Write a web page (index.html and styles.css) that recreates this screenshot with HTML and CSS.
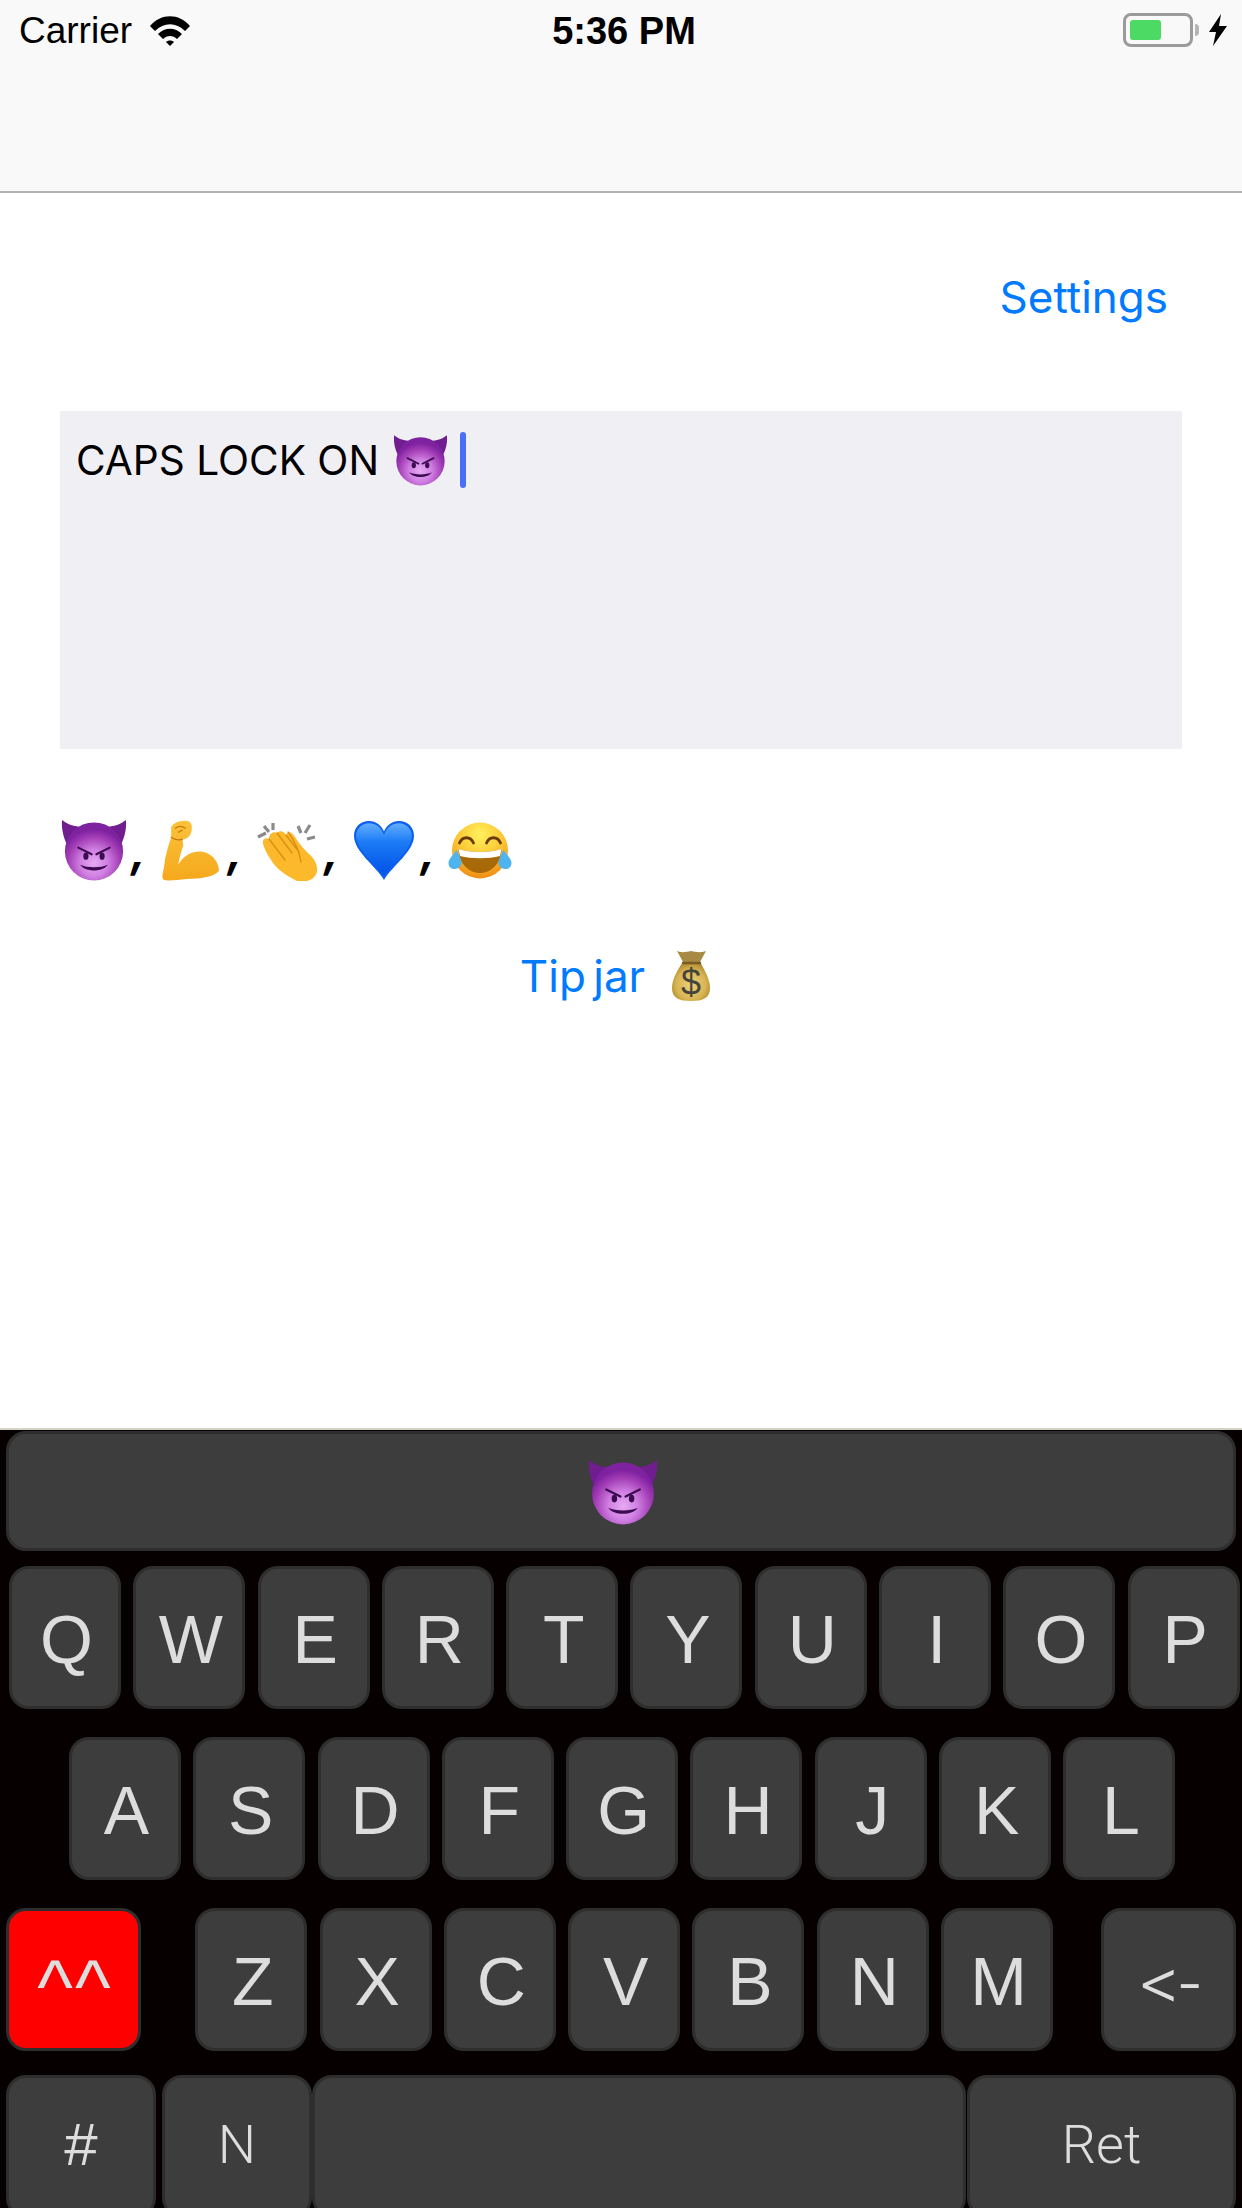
FILE: index.html
```html
<!DOCTYPE html>
<html lang="en">
<head>
    <meta charset="UTF-8">
    <title>Caps Lock Keyboard</title>
    <link rel="stylesheet" href="styles.css">
</head>
<body>

    <!-- shared emoji drawings -->
    <svg class="defs" width="0" height="0">
        <defs>
            <radialGradient id="devilFace" cx="50%" cy="70%" r="58%">
                <stop offset="0" stop-color="#e6aaf3"/>
                <stop offset="0.4" stop-color="#d080e2"/>
                <stop offset="0.78" stop-color="#a23cb5"/>
                <stop offset="1" stop-color="#7f22a0"/>
            </radialGradient>
            <linearGradient id="armFill" x1="0" y1="0" x2="0" y2="1">
                <stop offset="0" stop-color="#fcc23a"/>
                <stop offset="1" stop-color="#f5a81c"/>
            </linearGradient>
            <linearGradient id="heartFill" x1="0" y1="0" x2="0" y2="1">
                <stop offset="0" stop-color="#62aefc"/>
                <stop offset="0.35" stop-color="#1d7cf6"/>
                <stop offset="1" stop-color="#0050e6"/>
            </linearGradient>
            <radialGradient id="laughFace" cx="50%" cy="22%" r="80%">
                <stop offset="0" stop-color="#fff25c"/>
                <stop offset="0.55" stop-color="#fcc332"/>
                <stop offset="1" stop-color="#ee8a12"/>
            </radialGradient>
            <radialGradient id="bagFill" cx="50%" cy="58%" r="60%">
                <stop offset="0" stop-color="#ecd07a"/>
                <stop offset="0.65" stop-color="#d8b453"/>
                <stop offset="1" stop-color="#a98226"/>
            </radialGradient>

            <symbol id="devil" viewBox="0 0 67 64">
                <path d="M0 0 C5 4 10 6 18 7 L8 30 C2 22 -1 10 0 0Z" fill="#701d90"/>
                <path d="M67 0 C62 4 57 6 49 7 L59 30 C65 22 68 10 67 0Z" fill="#701d90"/>
                <circle cx="33.500" cy="33" r="30.500" fill="url(#devilFace)"/>
                <path d="M17 29 L31 36 M50 29 L36 36" stroke="#3c0b50" stroke-width="2.200" stroke-linecap="round"/>
                <ellipse cx="25" cy="38" rx="2.700" ry="3.800" fill="#3c0b50"/>
                <ellipse cx="42" cy="38" rx="2.700" ry="3.800" fill="#3c0b50"/>
                <path d="M19 47 C26 50.500 41 50.500 48 47 C43 55 24 55 19 47Z" fill="#3c0b50"/>
            </symbol>

            <symbol id="muscle" viewBox="0 0 57 60">
                <path d="M9 7 C11 3 18 0 24 1 C29 1 30 6 29 11 C28 16 24 19 20 19 L21 25 C19 30 17 38 16 44 C21 35 29 31 37 31 C47 31 56 40 56 50 C52 56 38 58 24 58 C16 59 6 60 2 59 C-1 57 1 52 2 46 C3 36 6 26 9 17Z" fill="url(#armFill)"/>
                <path d="M13 8 C16 6 20 6 23 8 M16 12 L20 10 M9 17 C13 20 16 20 20 19" fill="none" stroke="#c47c0c" stroke-width="1.200" stroke-linecap="round"/>
            </symbol>

            <symbol id="clap" viewBox="0 0 60 61">
                <path d="M1 17 L9 13 M7 6 L12 12 M16 3 L16 10 M41 6 L44 13 M53 5 L48 13 M58 17 L50 19" stroke="#8a8a8a" stroke-width="3.200"/>
                <path d="M6 24 C5 19 9 17 12 19 C12 13 17 11 20 13 C23 10 27 11 29 15 L31 12 C35 12 37 15 40 20 C44 26 48 30 52 34 C58 39 61 46 60 52 C58 58 54 60 50 61 L40 61 C30 56 21 50 16 43 C12 37 8 31 6 24Z" fill="#fbb92b"/>
                <path d="M12 19 L28 40 M20 13 L35 33 M29 15 L42 32 M31 12 C37 20 42 30 44 42" fill="none" stroke="#d98f12" stroke-width="1.300" stroke-linecap="round"/>
            </symbol>

            <symbol id="heart" viewBox="0 0 59 58">
                <path d="M29.500 57 C22 44 1 30 1 15 C1 6 8 1 15 1 C22 1 27 5 29.500 11 C32 5 37 1 44 1 C51 1 58 6 58 15 C58 30 37 44 29.500 57Z" fill="#0a5ff0"/>
                <path d="M29.500 53 C22 42 3 29 3 15 C3 8 9 3 15 3 C22 3 27 7 29.500 14 C32 7 37 3 44 3 C50 3 56 8 56 15 C56 29 37 42 29.500 53Z" fill="url(#heartFill)"/>
            </symbol>

            <symbol id="laugh" viewBox="0 -2 63 61">
                <circle cx="31.500" cy="28.500" r="28" fill="url(#laughFace)"/>
                <path d="M11 21 C14 14 22 14 25 21 M38 21 C41 14 49 14 52 21" fill="none" stroke="#6b3a0a" stroke-width="2.800" stroke-linecap="round"/>
                <path d="M10 27 C22 31 41 31 53 27 C53 41 43 51 31.500 51 C20 51 10 41 10 27Z" fill="#a86a08"/>
                <path d="M10 27 C22 31 41 31 53 27 L51.500 34 C40 37 23 37 11.500 34Z" fill="#fff"/>
                <path d="M8 28 C4 34 0 37 0 41 C0 45 3 47 6 47 C10 47 13 44 13 41 C13 37 10 33 8 28Z" fill="#4db4f0"/>
                <path d="M55 28 C59 34 63 37 63 41 C63 45 60 47 57 47 C53 47 50 44 50 41 C50 37 53 33 55 28Z" fill="#4db4f0"/>
            </symbol>

            <symbol id="moneybag" viewBox="0 0 42 52">
                <path d="M7 1 C12 3 16 2 21 1 C26 2 30 3 36 1 L30 12 L13 12Z" fill="#a98a45"/>
                <path d="M13 12 C8 19 2 29 2 38 C2 48 9 51 21 51 C33 51 40 48 40 38 C40 29 34 19 30 12Z" fill="url(#bagFill)"/>
                <path d="M13 13 L30 13" stroke="#7a5d24" stroke-width="2.500" stroke-linecap="round"/>
                <text x="21" y="45" text-anchor="middle" class="bag-sign">$</text>
            </symbol>
        </defs>
    </svg>

    <div class="page">
        <div class="status">
            <div class="status-left">
                <span>Carrier</span>
                <svg class="wifi" viewBox="0 0 40 30">
                    <path d="M0 10 C11 -3 29 -3 40 10 L35 15 C26 6 14 6 5 15Z"/>
                    <path d="M8 18 C15 11 25 11 32 18 L27 23 C23 19 17 19 13 23Z"/>
                    <path d="M16 26 C18 24 22 24 24 26 L20 30Z"/>
                </svg>
            </div>
            <div class="status-time">5:36 PM</div>
            <div class="status-right">
                <div class="battery"><div class="battery-fill"></div></div>
                <div class="battery-nub"></div>
                <svg class="bolt" viewBox="0 0 18 32">
                    <path d="M12 0 L0 18 L7 18 L4 32 L18 12 L10 12Z"/>
                </svg>
            </div>
        </div>

        <div class="content">
            <div class="settings-row"><a class="link">Settings</a></div>

            <div class="textbox">
                <span class="textbox-text">CAPS LOCK ON</span>
                <svg class="typed-emoji"><use href="#devil"/></svg>
                <span class="caret"></span>
            </div>

            <div class="emoji-row">
                <svg class="emoji"><use href="#devil"/></svg><span class="comma">,</span>
                <svg class="emoji"><use href="#muscle"/></svg><span class="comma">,</span>
                <svg class="emoji"><use href="#clap"/></svg><span class="comma">,</span>
                <svg class="emoji"><use href="#heart"/></svg><span class="comma">,</span>
                <svg class="emoji"><use href="#laugh"/></svg>
            </div>

            <div class="tip-row">
                <a class="link">Tip jar</a>
                <svg class="bag"><use href="#moneybag"/></svg>
            </div>
        </div>

        <div class="keyboard">
            <div class="key key-wide">
                <svg class="key-emoji"><use href="#devil"/></svg>
            </div>

            <div class="row row-top">
                <div class="key">Q</div>
                <div class="key">W</div>
                <div class="key">E</div>
                <div class="key">R</div>
                <div class="key">T</div>
                <div class="key">Y</div>
                <div class="key">U</div>
                <div class="key">I</div>
                <div class="key">O</div>
                <div class="key">P</div>
            </div>

            <div class="row row-home">
                <div class="key">A</div>
                <div class="key">S</div>
                <div class="key">D</div>
                <div class="key">F</div>
                <div class="key">G</div>
                <div class="key">H</div>
                <div class="key">J</div>
                <div class="key">K</div>
                <div class="key">L</div>
            </div>

            <div class="row row-bottom">
                <div class="key key-shift"><span class="shift-label">^^</span></div>
                <div class="key">Z</div>
                <div class="key">X</div>
                <div class="key">C</div>
                <div class="key">V</div>
                <div class="key">B</div>
                <div class="key">N</div>
                <div class="key">M</div>
                <div class="key key-back"><span class="back-label">&lt;-</span></div>
            </div>

            <div class="row row-last">
                <div class="key key-small key-num">#</div>
                <div class="key key-small key-next">N</div>
                <div class="key key-space"></div>
                <div class="key key-small key-ret">Ret</div>
            </div>
        </div>
    </div>

</body>
</html>
```

FILE: styles.css
```css
* {
    box-sizing: border-box;
}

html, body {
    margin: 0;
    padding: 0;
    background: #fff;
}

.defs {
    position: absolute;
}

.bag-sign {
    font-family: "Liberation Sans", sans-serif;
    font-size: 36px;
    fill: #45443a;
}

.page {
    width: 1242px;
    height: 2208px;
    display: flex;
    flex-direction: column;
    overflow: hidden;
    font-family: Inter, "Liberation Sans", sans-serif;
}

/* status bar */

.status {
    height: 193px;
    padding: 13px 15px 0 19px;
    background: #f9f9f9;
    border-bottom: 2px solid #b2b2b2;
    display: grid;
    grid-template-columns: 1fr auto 1fr;
    align-items: start;
    font-family: "Liberation Sans", sans-serif;
    font-size: 37px;
    line-height: 36px;
    color: #000;
}

.status-left {
    display: flex;
    align-items: center;
    gap: 18px;
}

.wifi {
    width: 40px;
    height: 30px;
}

.status-time {
    font-size: 38px;
    font-weight: bold;
    margin-left: 2px;
}

.status-right {
    display: flex;
    justify-content: flex-end;
    align-items: center;
}

.battery {
    width: 70px;
    height: 34px;
    padding: 4px;
    border: 3px solid #9b9b9b;
    border-radius: 8px;
}

.battery-fill {
    width: 31px;
    height: 100%;
    background: #4cd964;
    border-radius: 3px;
}

.battery-nub {
    width: 4px;
    height: 12px;
    background: #b5b5b5;
    border-radius: 0 4px 4px 0;
    margin-left: 2px;
}

.bolt {
    width: 18px;
    height: 32px;
    margin-left: 10px;
}

/* middle of the page */

.content {
    flex: 1;
    padding: 77px 0 0 60px;
}

.link {
    color: #007aff;
    font-size: 44px;
    line-height: 54px;
}

.settings-row {
    display: flex;
    justify-content: flex-end;
    padding-right: 74px;
}

.textbox {
    width: 1122px;
    height: 338px;
    margin-top: 87px;
    padding: 21px 16px;
    background: #efeff4;
    display: flex;
    align-items: flex-start;
}

.textbox-text {
    font-size: 40.6px;
    line-height: 50px;
    padding-top: 4px;
    color: #000;
}

.typed-emoji {
    width: 53px;
    height: 51px;
    margin: 3px 0 0 15px;
}

.caret {
    width: 6px;
    height: 56px;
    margin-left: 13px;
    background: #4a6ef5;
    border-radius: 3px;
}

.emoji-row {
    display: flex;
    height: 61px;
    margin-top: 71px;
}

.emoji {
    width: 68px;
    height: 61px;
}

.comma {
    width: 28.5px;
    padding-left: 3px;
    font-size: 45px;
    font-weight: 700;
    line-height: 61px;
    font-style: italic;
    color: #000;
}

.tip-row {
    display: flex;
    justify-content: center;
    align-items: center;
    gap: 25px;
    width: 1112px;
    margin-top: 68px;
    word-spacing: -5px;
}

.bag {
    width: 42px;
    height: 52px;
}

/* keyboard */

.keyboard {
    height: 780px;
    padding: 1px 0 0;
    background: #070000;
    border-top: 2px solid #d2d2c6;
    display: flex;
    flex-direction: column;
}

.key {
    width: 112px;
    height: 143px;
    flex: none;
    display: flex;
    justify-content: center;
    align-items: center;
    padding: 3px 0 0 3px;
    background: #3d3d3d;
    border: 3px solid #2e2e2e;
    border-radius: 20px;
    color: #ddd;
    font-family: "Liberation Sans", sans-serif;
    font-size: 68px;
}

.key-wide {
    width: 1230px;
    height: 120px;
    margin-left: 6px;
}

.key-emoji {
    width: 68px;
    height: 65px;
}

.row {
    display: flex;
    gap: 12.3px;
    margin-top: 28px;
}

.row-top {
    margin-top: 15px;
    padding-left: 9px;
}

.row-home {
    padding-left: 69px;
}

.row-bottom {
    padding-left: 6px;
}

.key-shift {
    width: 135px;
    margin-right: 42px;
    background: #f00;
}

.shift-label {
    font-size: 76px;
    letter-spacing: 2px;
    margin-top: 11px;
}

.key-back {
    width: 135px;
    margin-left: 36px;
}

.back-label {
    font-family: Roboto, "Liberation Sans", sans-serif;
    font-weight: 300;
    font-size: 76px;
    padding-top: 6px;
}

.row-last {
    gap: 0;
    margin-top: 24px;
    padding-left: 6px;
}

.key-small {
    height: 143px;
    padding: 0 0 4px;
    font-size: 54px;
}

.key-num {
    width: 150px;
    margin-right: 6px;
    font-size: 60px;
}

.key-next {
    width: 150px;
    font-family: Roboto, "Liberation Sans", sans-serif;
    font-weight: 300;
}

.key-space {
    width: 654px;
    margin-right: 1px;
}

.key-ret {
    width: 269px;
    font-family: Roboto, "Liberation Sans", sans-serif;
    font-weight: 300;
}
```
